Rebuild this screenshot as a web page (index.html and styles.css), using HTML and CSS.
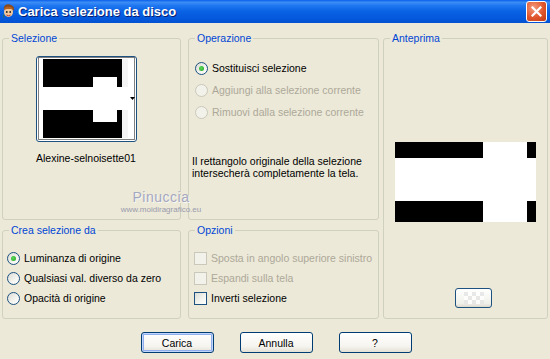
FILE: index.html
```html
<!DOCTYPE html>
<html>
<head lang="it">
  <meta charset="UTF-8">
  <title>Carica selezione da disco</title>
  <link rel="stylesheet" href="styles.css">
</head>
<body>
<div class="dialog">
  <!-- barra del titolo -->
  <div class="titlebar">
    <svg class="app-icon" width="13" height="15" viewBox="0 0 13 15">
      <path d="M2 5 C1 1 6 -1 9 1 C12 2 13 5 11 7 L10 4 L4 4 Z" fill="#8a4a1c"/>
      <ellipse cx="6.5" cy="8" rx="4.5" ry="5" fill="#f3c89a"/>
      <path d="M2 6 C2 3 5 2 7 3 C9 2 11 4 11 6 L9 5 L5 5 Z" fill="#b5631f"/>
      <circle cx="4.8" cy="8" r="0.9" fill="#222"/>
      <circle cx="8.2" cy="8" r="0.9" fill="#222"/>
      <path d="M4.5 11 Q6.5 12.5 8.5 11" stroke="#c0392b" stroke-width="1" fill="none"/>
      <path d="M1 9 L2.5 13 L1.5 14 Z" fill="#2e7d32"/>
    </svg>
    <span class="title">Carica selezione da disco</span>
    <span class="close-btn">
      <svg width="11" height="11" viewBox="0 0 11 11">
        <path d="M1.5 1.5 L9.5 9.5 M9.5 1.5 L1.5 9.5" stroke="#fff" stroke-width="2.2" stroke-linecap="square"/>
      </svg>
    </span>
  </div>

  <div class="content">
    <div class="groups">
      <!-- Selezione -->
      <div class="group sel">
        <span class="group-title">Selezione</span>
        <div class="thumb">
          <svg width="99" height="84" viewBox="0 0 99 84">
            <rect x="6" y="2" width="79" height="79" fill="#000"/>
            <rect x="85" y="2" width="6" height="79" fill="#f4f4f4"/>
            <rect x="6" y="30" width="85" height="23" fill="#fff"/>
            <rect x="56" y="20" width="24" height="45" fill="#fff"/>
            <rect x="1.5" y="0.5" width="96" height="82" fill="none" stroke="#000" stroke-dasharray="1 1"/>
            <path d="M93 40 L98 40 L95.5 43 Z" fill="#000"/>
          </svg>
        </div>
        <div class="thumb-name">Alexine-selnoisette01</div>
      </div>

      <!-- Operazione -->
      <div class="group op">
        <span class="group-title">Operazione</span>
        <div class="options first">
          <label class="row"><span class="radio checked"></span>Sostituisci selezione</label>
          <label class="row disabled"><span class="radio"></span>Aggiungi alla selezione corrente</label>
          <label class="row disabled"><span class="radio"></span>Rimuovi dalla selezione corrente</label>
        </div>
        <p class="note">Il rettangolo originale della selezione<br>intersecherà completamente la tela.</p>
      </div>

      <!-- Anteprima -->
      <div class="group preview">
        <span class="group-title">Anteprima</span>
        <svg class="preview-img" width="141" height="80" viewBox="0 0 141 80">
          <rect width="141" height="80" fill="#fff"/>
          <rect x="0" y="0" width="88" height="16" fill="#000"/>
          <rect x="132" y="0" width="9" height="16" fill="#000"/>
          <rect x="0" y="59" width="88" height="21" fill="#000"/>
          <rect x="132" y="59" width="9" height="21" fill="#000"/>
        </svg>
        <span class="bg-btn"><span class="checker"></span></span>
      </div>

      <!-- Crea selezione da -->
      <div class="group crea">
        <span class="group-title">Crea selezione da</span>
        <div class="options">
          <label class="row"><span class="radio checked"></span>Luminanza di origine</label>
          <label class="row"><span class="radio"></span>Qualsiasi val. diverso da zero</label>
          <label class="row"><span class="radio"></span>Opacità di origine</label>
        </div>
      </div>

      <!-- Opzioni -->
      <div class="group opts">
        <span class="group-title">Opzioni</span>
        <div class="options">
          <label class="row disabled"><span class="check"></span>Sposta in angolo superiore sinistro</label>
          <label class="row disabled"><span class="check"></span>Espandi sulla tela</label>
          <label class="row"><span class="check"></span>Inverti selezione</label>
        </div>
      </div>
    </div>

    <div class="buttons">
      <button class="btn default">Carica</button>
      <button class="btn">Annulla</button>
      <button class="btn">?</button>
    </div>

    <!-- firma sopra i riquadri -->
    <div class="watermark">
      <div class="wm-name">Pinuccia</div>
      <div class="wm-url">www.moidiragrafico.eu</div>
    </div>
  </div>
</div>
</body>
</html>
```

FILE: styles.css
```css
* {
  margin: 0;
  padding: 0;
  box-sizing: border-box;
}

body {
  width: 550px;
  height: 359px;
  overflow: hidden;
  background-color: #ECE9D8;
  font-family: "Liberation Sans", Arial, sans-serif;
  font-size: 10.5px;
  color: #000;
}

.dialog {
  position: relative;
  height: 359px;
}

/* barra del titolo stile XP */
.titlebar {
  height: 23px;
  display: flex;
  align-items: center;
  padding: 0 3px 0 2px;
  background: linear-gradient(to bottom, #0A5FEA 0%, #3D8DF6 10%, #1E76F0 25%, #0962E4 50%, #0458DC 80%, #0352D2 100%);
}

.app-icon {
  flex: none;
  margin-top: -1px;
}

.title {
  flex: 1;
  margin-left: 3px;
  color: #fff;
  font-weight: bold;
  font-size: 13px;
  text-shadow: 1px 1px 0 #0A1E70;
}

.close-btn {
  width: 21px;
  height: 21px;
  display: flex;
  align-items: center;
  justify-content: center;
  border: 1px solid #fff;
  border-radius: 3px;
  background: radial-gradient(circle at 35% 30%, #F49A7E 0%, #E0562C 55%, #C23A12 100%);
}

.content {
  padding-top: 15px;
}

.groups {
  display: grid;
  grid-template-columns: 179px 198px 169px;
  grid-template-rows: 182px 89px;
  row-gap: 10px;
  padding-left: 2px;
}

.group {
  border: 1px solid #D0D0BF;
  border-radius: 3px;
}

.group-title {
  display: block;
  width: fit-content;
  margin: -7px 0 0 6px;
  padding: 0 2px;
  line-height: 12px;
  color: #0046D5;
  background-color: #ECE9D8;
}

.op, .opts {
  margin-left: 7px;
}

.preview {
  grid-column: 3;
  grid-row: 1 / 3;
  margin-left: 4px;
}

.crea {
  grid-column: 1;
  grid-row: 2;
}

.opts {
  grid-column: 2;
  grid-row: 2;
}

/* Selezione */
.thumb {
  width: 101px;
  height: 86px;
  margin: 12px 0 0 33px;
  padding: 0 0 0 0;
  border: 1px solid #1C5180;
  border-radius: 3px;
  background-color: #fff;
}

.thumb svg {
  display: block;
}

.thumb-name {
  margin: 10px 0 0 33px;
  line-height: 12px;
}

/* righe con radio e check */
.options {
  display: flex;
  flex-direction: column;
  gap: 7px;
  margin-top: 16px;
}

.options.first {
  gap: 9px;
  margin-top: 18px;
}

.row {
  display: flex;
  align-items: center;
  height: 13px;
  line-height: 13px;
  white-space: nowrap;
}

.row.disabled {
  color: #ACA899;
}

.radio {
  flex: none;
  width: 13px;
  height: 13px;
  margin-right: 4px;
  border: 1px solid #1C5180;
  border-radius: 50%;
  background: linear-gradient(135deg, #DCDCD7 0%, #F4F4F0 60%, #fff 100%);
  display: flex;
  align-items: center;
  justify-content: center;
}

.radio.checked::after {
  content: "";
  width: 5px;
  height: 5px;
  border-radius: 50%;
  background: radial-gradient(circle at 40% 40%, #5AD85A, #21A121);
}

.row.disabled .radio,
.row.disabled .check {
  border-color: #CAC8BB;
  background: #F3F2EA;
}

.op .radio {
  margin-left: 6px;
}

.crea .radio {
  margin-left: 4px;
}

.check {
  flex: none;
  width: 13px;
  height: 13px;
  margin-left: 5px;
  margin-right: 4px;
  border: 1px solid #1C5180;
  background: linear-gradient(135deg, #DCDCD7 0%, #F4F4F0 60%, #fff 100%);
}

.note {
  margin: 36px 0 0 3px;
  line-height: 12px;
}

/* Anteprima */
.preview-img {
  display: block;
  margin: 98px 0 0 11px;
}

.bg-btn {
  display: flex;
  align-items: center;
  justify-content: center;
  width: 37px;
  height: 20px;
  margin: 66px 0 0 71px;
  border: 1px solid #1C5180;
  border-radius: 3px;
  background: linear-gradient(to bottom, #fff, #F0F0EA 80%, #DCD8CC);
}

.checker {
  width: 20px;
  height: 12px;
  background: repeating-conic-gradient(#fff 0 25%, #E4E4E4 0 50%) 0 0 / 8px 8px;
  opacity: 0.8;
}

/* pulsanti */
.buttons {
  display: flex;
  justify-content: center;
  gap: 26px;
  margin-top: 13px;
  padding-left: 2px;
}

.btn {
  width: 73px;
  height: 21px;
  border: 1px solid #003C74;
  border-radius: 3px;
  background: linear-gradient(to bottom, #fff 0%, #F5F4EF 70%, #E3E0D5 100%);
  font-family: "Liberation Sans", Arial, sans-serif;
  font-size: 10.5px;
  color: #000;
}

.btn.default {
  box-shadow: inset 0 0 0 1px #C2D5FA, inset 0 0 0 2px #8FAEEB;
}

/* firma */
.watermark {
  position: absolute;
  left: 116px;
  top: 189px;
  width: 90px;
  text-align: center;
  color: #A5A7C0;
}

.wm-name {
  font-size: 14px;
  line-height: 16px;
  letter-spacing: 0.5px;
  text-shadow: 1px 1px 0 #F8F8F4;
}

.wm-url {
  font-size: 8px;
  line-height: 10px;
  color: #9A9AAC;
}
```
